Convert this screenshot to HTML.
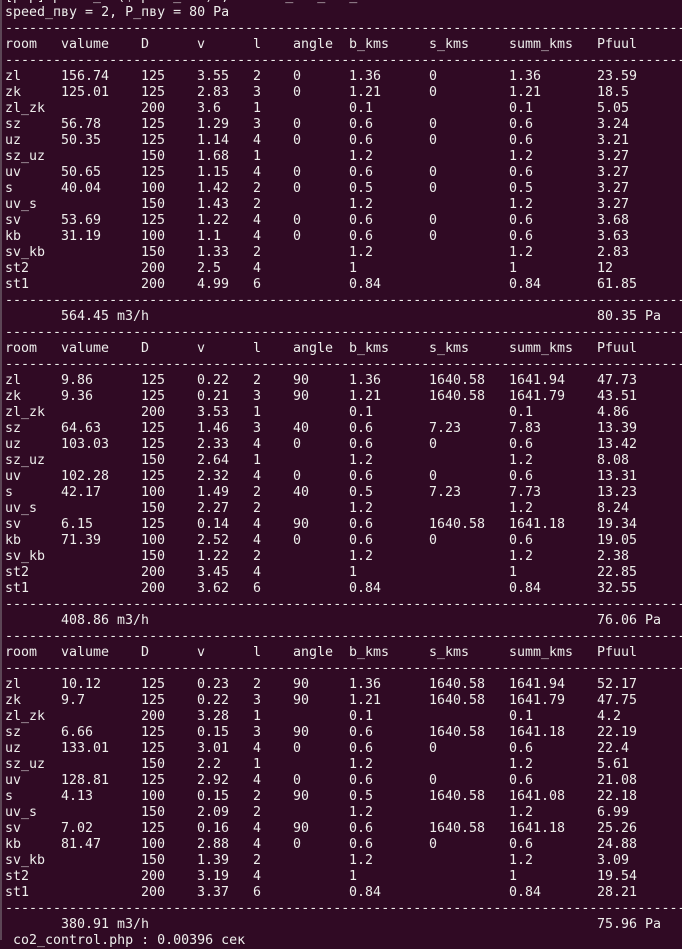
<!DOCTYPE html>
<html><head><meta charset="utf-8"><style>
html,body{margin:0;padding:0;background:#300a24;width:682px;height:940px;overflow:hidden;}
#t{position:absolute;left:5px;top:-11px;font-family:"DejaVu Sans Mono","Liberation Mono",monospace;font-size:13.3px;line-height:16px;color:#eeeeec;}
.r{height:16px;white-space:nowrap;}
.r i{font-style:normal;display:inline-block;vertical-align:top;white-space:pre;height:16px;}
.r i:nth-child(1){width:56px}.r i:nth-child(2){width:80px}.r i:nth-child(3){width:56px}.r i:nth-child(4){width:56px}.r i:nth-child(5){width:40px}.r i:nth-child(6){width:56px}.r i:nth-child(7){width:80px}.r i:nth-child(8){width:80px}.r i:nth-child(9){width:88px}
.d{height:16px;overflow:hidden;width:680px;white-space:pre;}
#s{position:absolute;left:0;top:0;width:2px;height:940px;background:#5c4656}
</style></head><body><div id="s"></div><div id="t">
<div class="d">[php] print_r ($speed_arr) ; ...   _   _co2_control</div>
<div class="d">speed_пву = 2, P_пву = 80 Pa</div>
<div class="d">-----------------------------------------------------------------------------------------</div>
<div class="r"><i>room</i><i>valume</i><i>D</i><i>v</i><i>l</i><i>angle</i><i>b_kms</i><i>s_kms</i><i>summ_kms</i><i>Pfuul</i></div>
<div class="d">-----------------------------------------------------------------------------------------</div>
<div class="r"><i>zl</i><i>156.74</i><i>125</i><i>3.55</i><i>2</i><i>0</i><i>1.36</i><i>0</i><i>1.36</i><i>23.59</i></div>
<div class="r"><i>zk</i><i>125.01</i><i>125</i><i>2.83</i><i>3</i><i>0</i><i>1.21</i><i>0</i><i>1.21</i><i>18.5</i></div>
<div class="r"><i>zl_zk</i><i></i><i>200</i><i>3.6</i><i>1</i><i></i><i>0.1</i><i></i><i>0.1</i><i>5.05</i></div>
<div class="r"><i>sz</i><i>56.78</i><i>125</i><i>1.29</i><i>3</i><i>0</i><i>0.6</i><i>0</i><i>0.6</i><i>3.24</i></div>
<div class="r"><i>uz</i><i>50.35</i><i>125</i><i>1.14</i><i>4</i><i>0</i><i>0.6</i><i>0</i><i>0.6</i><i>3.21</i></div>
<div class="r"><i>sz_uz</i><i></i><i>150</i><i>1.68</i><i>1</i><i></i><i>1.2</i><i></i><i>1.2</i><i>3.27</i></div>
<div class="r"><i>uv</i><i>50.65</i><i>125</i><i>1.15</i><i>4</i><i>0</i><i>0.6</i><i>0</i><i>0.6</i><i>3.27</i></div>
<div class="r"><i>s</i><i>40.04</i><i>100</i><i>1.42</i><i>2</i><i>0</i><i>0.5</i><i>0</i><i>0.5</i><i>3.27</i></div>
<div class="r"><i>uv_s</i><i></i><i>150</i><i>1.43</i><i>2</i><i></i><i>1.2</i><i></i><i>1.2</i><i>3.27</i></div>
<div class="r"><i>sv</i><i>53.69</i><i>125</i><i>1.22</i><i>4</i><i>0</i><i>0.6</i><i>0</i><i>0.6</i><i>3.68</i></div>
<div class="r"><i>kb</i><i>31.19</i><i>100</i><i>1.1</i><i>4</i><i>0</i><i>0.6</i><i>0</i><i>0.6</i><i>3.63</i></div>
<div class="r"><i>sv_kb</i><i></i><i>150</i><i>1.33</i><i>2</i><i></i><i>1.2</i><i></i><i>1.2</i><i>2.83</i></div>
<div class="r"><i>st2</i><i></i><i>200</i><i>2.5</i><i>4</i><i></i><i>1</i><i></i><i>1</i><i>12</i></div>
<div class="r"><i>st1</i><i></i><i>200</i><i>4.99</i><i>6</i><i></i><i>0.84</i><i></i><i>0.84</i><i>61.85</i></div>
<div class="d">-----------------------------------------------------------------------------------------</div>
<div class="r"><i></i><i style="width:536px">564.45 m3/h</i><i>80.35 Pa</i></div>
<div class="d">-----------------------------------------------------------------------------------------</div>
<div class="r"><i>room</i><i>valume</i><i>D</i><i>v</i><i>l</i><i>angle</i><i>b_kms</i><i>s_kms</i><i>summ_kms</i><i>Pfuul</i></div>
<div class="d">-----------------------------------------------------------------------------------------</div>
<div class="r"><i>zl</i><i>9.86</i><i>125</i><i>0.22</i><i>2</i><i>90</i><i>1.36</i><i>1640.58</i><i>1641.94</i><i>47.73</i></div>
<div class="r"><i>zk</i><i>9.36</i><i>125</i><i>0.21</i><i>3</i><i>90</i><i>1.21</i><i>1640.58</i><i>1641.79</i><i>43.51</i></div>
<div class="r"><i>zl_zk</i><i></i><i>200</i><i>3.53</i><i>1</i><i></i><i>0.1</i><i></i><i>0.1</i><i>4.86</i></div>
<div class="r"><i>sz</i><i>64.63</i><i>125</i><i>1.46</i><i>3</i><i>40</i><i>0.6</i><i>7.23</i><i>7.83</i><i>13.39</i></div>
<div class="r"><i>uz</i><i>103.03</i><i>125</i><i>2.33</i><i>4</i><i>0</i><i>0.6</i><i>0</i><i>0.6</i><i>13.42</i></div>
<div class="r"><i>sz_uz</i><i></i><i>150</i><i>2.64</i><i>1</i><i></i><i>1.2</i><i></i><i>1.2</i><i>8.08</i></div>
<div class="r"><i>uv</i><i>102.28</i><i>125</i><i>2.32</i><i>4</i><i>0</i><i>0.6</i><i>0</i><i>0.6</i><i>13.31</i></div>
<div class="r"><i>s</i><i>42.17</i><i>100</i><i>1.49</i><i>2</i><i>40</i><i>0.5</i><i>7.23</i><i>7.73</i><i>13.23</i></div>
<div class="r"><i>uv_s</i><i></i><i>150</i><i>2.27</i><i>2</i><i></i><i>1.2</i><i></i><i>1.2</i><i>8.24</i></div>
<div class="r"><i>sv</i><i>6.15</i><i>125</i><i>0.14</i><i>4</i><i>90</i><i>0.6</i><i>1640.58</i><i>1641.18</i><i>19.34</i></div>
<div class="r"><i>kb</i><i>71.39</i><i>100</i><i>2.52</i><i>4</i><i>0</i><i>0.6</i><i>0</i><i>0.6</i><i>19.05</i></div>
<div class="r"><i>sv_kb</i><i></i><i>150</i><i>1.22</i><i>2</i><i></i><i>1.2</i><i></i><i>1.2</i><i>2.38</i></div>
<div class="r"><i>st2</i><i></i><i>200</i><i>3.45</i><i>4</i><i></i><i>1</i><i></i><i>1</i><i>22.85</i></div>
<div class="r"><i>st1</i><i></i><i>200</i><i>3.62</i><i>6</i><i></i><i>0.84</i><i></i><i>0.84</i><i>32.55</i></div>
<div class="d">-----------------------------------------------------------------------------------------</div>
<div class="r"><i></i><i style="width:536px">408.86 m3/h</i><i>76.06 Pa</i></div>
<div class="d">-----------------------------------------------------------------------------------------</div>
<div class="r"><i>room</i><i>valume</i><i>D</i><i>v</i><i>l</i><i>angle</i><i>b_kms</i><i>s_kms</i><i>summ_kms</i><i>Pfuul</i></div>
<div class="d">-----------------------------------------------------------------------------------------</div>
<div class="r"><i>zl</i><i>10.12</i><i>125</i><i>0.23</i><i>2</i><i>90</i><i>1.36</i><i>1640.58</i><i>1641.94</i><i>52.17</i></div>
<div class="r"><i>zk</i><i>9.7</i><i>125</i><i>0.22</i><i>3</i><i>90</i><i>1.21</i><i>1640.58</i><i>1641.79</i><i>47.75</i></div>
<div class="r"><i>zl_zk</i><i></i><i>200</i><i>3.28</i><i>1</i><i></i><i>0.1</i><i></i><i>0.1</i><i>4.2</i></div>
<div class="r"><i>sz</i><i>6.66</i><i>125</i><i>0.15</i><i>3</i><i>90</i><i>0.6</i><i>1640.58</i><i>1641.18</i><i>22.19</i></div>
<div class="r"><i>uz</i><i>133.01</i><i>125</i><i>3.01</i><i>4</i><i>0</i><i>0.6</i><i>0</i><i>0.6</i><i>22.4</i></div>
<div class="r"><i>sz_uz</i><i></i><i>150</i><i>2.2</i><i>1</i><i></i><i>1.2</i><i></i><i>1.2</i><i>5.61</i></div>
<div class="r"><i>uv</i><i>128.81</i><i>125</i><i>2.92</i><i>4</i><i>0</i><i>0.6</i><i>0</i><i>0.6</i><i>21.08</i></div>
<div class="r"><i>s</i><i>4.13</i><i>100</i><i>0.15</i><i>2</i><i>90</i><i>0.5</i><i>1640.58</i><i>1641.08</i><i>22.18</i></div>
<div class="r"><i>uv_s</i><i></i><i>150</i><i>2.09</i><i>2</i><i></i><i>1.2</i><i></i><i>1.2</i><i>6.99</i></div>
<div class="r"><i>sv</i><i>7.02</i><i>125</i><i>0.16</i><i>4</i><i>90</i><i>0.6</i><i>1640.58</i><i>1641.18</i><i>25.26</i></div>
<div class="r"><i>kb</i><i>81.47</i><i>100</i><i>2.88</i><i>4</i><i>0</i><i>0.6</i><i>0</i><i>0.6</i><i>24.88</i></div>
<div class="r"><i>sv_kb</i><i></i><i>150</i><i>1.39</i><i>2</i><i></i><i>1.2</i><i></i><i>1.2</i><i>3.09</i></div>
<div class="r"><i>st2</i><i></i><i>200</i><i>3.19</i><i>4</i><i></i><i>1</i><i></i><i>1</i><i>19.54</i></div>
<div class="r"><i>st1</i><i></i><i>200</i><i>3.37</i><i>6</i><i></i><i>0.84</i><i></i><i>0.84</i><i>28.21</i></div>
<div class="d">-----------------------------------------------------------------------------------------</div>
<div class="r"><i></i><i style="width:536px">380.91 m3/h</i><i>75.96 Pa</i></div>
<div class="d"> co2_control.php : 0.00396 сек</div>
</div></body></html>
